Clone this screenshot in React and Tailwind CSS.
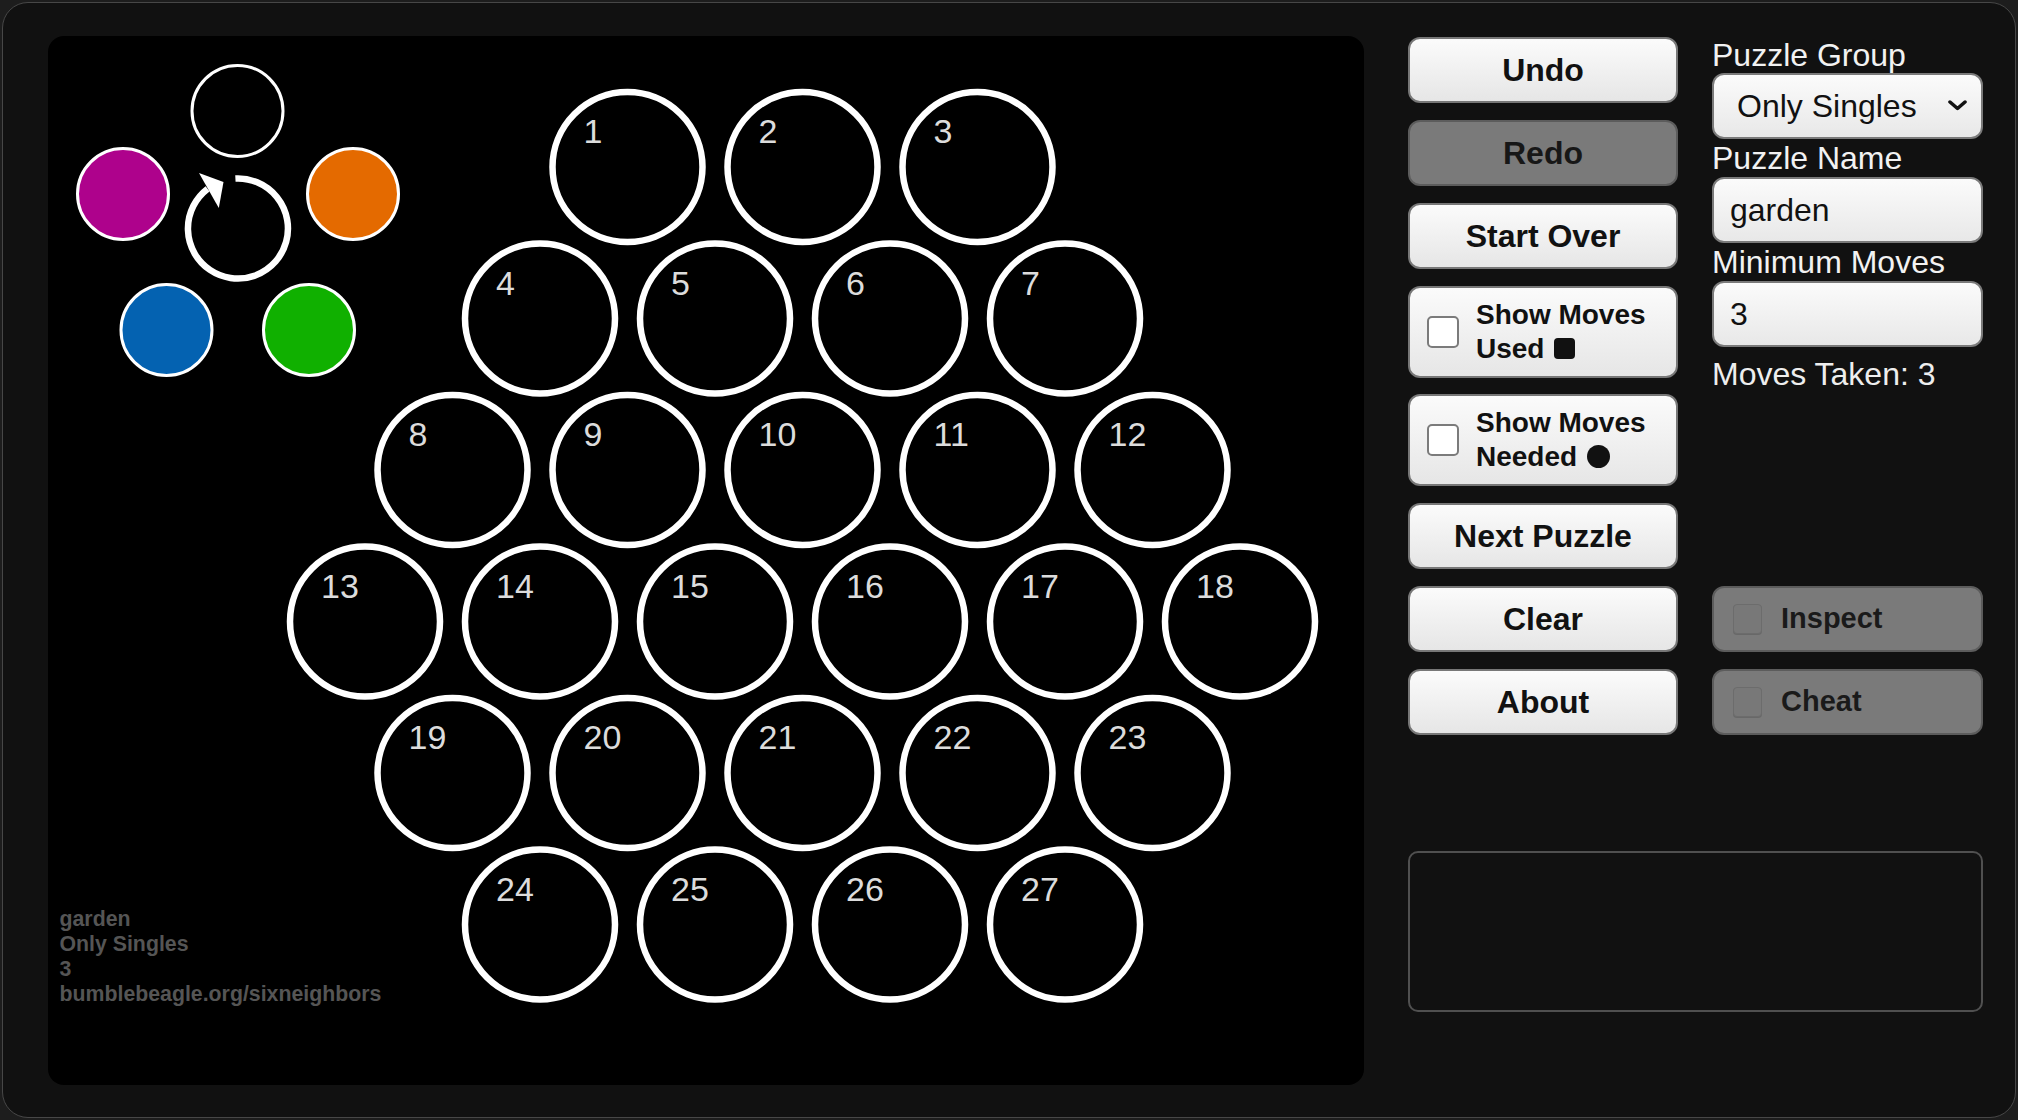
import clsx from 'clsx';

const ROWS = [3, 4, 5, 6, 5, 4];
const ROW_START = [579.5, 492, 404.5, 317, 404.5, 492];

const PALETTE = [
    { cx: 75, cy: 158, fill: '#ae028c' },
    { cx: 305, cy: 158, fill: '#e46a00' },
    { cx: 118.5, cy: 294, fill: '#0462b1' },
    { cx: 261, cy: 294, fill: '#10b000' },
];

function boardCells() {
    const cells = [];
    let n = 0;
    ROWS.forEach((count, row) => {
        for (let i = 0; i < count; i++) {
            n += 1;
            cells.push({ n, x: ROW_START[row] + i * 175, y: 131 + row * 151.5 });
        }
    });
    return cells;
}

function Board() {
    const cells = boardCells();

    return (
        <div className="relative h-[1049px] w-[1316px] shrink-0 rounded-[16px] bg-black">
            <svg className="absolute inset-0" width="1316" height="1049" viewBox="0 0 1316 1049">
                {/* colour picker */}
                <circle cx="189.5" cy="75" r="45.5" fill="black" stroke="white" strokeWidth="3" />
                {PALETTE.map((p) => (
                    <circle key={p.fill} cx={p.cx} cy={p.cy} r="45.5" fill={p.fill} stroke="white" strokeWidth="3" />
                ))}
                <path
                    d="M187.4 142.6 A50 50 0 1 1 159.6 152.8"
                    fill="none"
                    stroke="white"
                    strokeWidth="6.5"
                />
                <polygon points="151,137 175.5,146 170.8,172" fill="white" />

                {/* puzzle cells */}
                {cells.map((c) => (
                    <g key={c.n}>
                        <circle cx={c.x} cy={c.y} r="75" fill="black" stroke="white" strokeWidth="6.5" />
                        <text x={c.x - 44} y={c.y - 24} fill="#dcdcdc" fontSize="34">
                            {c.n}
                        </text>
                    </g>
                ))}
            </svg>

            <div className="absolute bottom-[78px] left-[12px] text-[21.3px] font-bold leading-[25px] text-[#555555]">
                <div>garden</div>
                <div>Only Singles</div>
                <div>3</div>
                <div>bumblebeagle.org/sixneighbors</div>
            </div>
        </div>
    );
}

function Button({ children, disabled }) {
    return (
        <button
            type="button"
            className={clsx(
                'flex h-[66.5px] w-full items-center justify-center rounded-[12px] border-2 text-[32px] font-bold leading-none',
                disabled
                    ? 'border-[#5c5c5c] bg-[#7a7a7a] text-[#171717]'
                    : 'border-[#777777] bg-linear-to-b from-[#fbfbfb] to-[#e6e6e6] text-[#111111]',
            )}
        >
            {children}
        </button>
    );
}

function ToggleButton({ line1, line2, marker }) {
    return (
        <button
            type="button"
            className="flex h-[92px] w-full items-center rounded-[12px] border-2 border-[#777777] bg-linear-to-b from-[#fbfbfb] to-[#e6e6e6] pl-[17px] text-left text-[#111111]"
        >
            <span className="h-[32px] w-[32px] shrink-0 rounded-[5px] border-2 border-[#7b7b7b] bg-white" />
            <span className="ml-[17px] text-[28px] font-bold leading-[34px]">
                {line1}
                <br />
                {line2}
                {marker === 'square' ? (
                    <span className="ml-[10px] inline-block h-[21px] w-[21px] rounded-[4px] bg-[#111111] align-[-1px]" />
                ) : (
                    <span className="ml-[10px] inline-block h-[23px] w-[23px] rounded-full bg-[#111111] align-[-2px]" />
                )}
            </span>
        </button>
    );
}

function DisabledCheck({ label }) {
    return (
        <button
            type="button"
            className="flex h-[66.5px] w-full items-center rounded-[12px] border-2 border-[#5c5c5c] bg-[#7a7a7a] pl-[19px] text-[29px] font-bold text-[#1a1a1a]"
        >
            <span className="h-[30px] w-[29px] shrink-0 rounded-[4px] border border-[#6c6c6c] bg-[#787878] shadow-[0_1px_0_#686868]" />
            <span className="ml-[19px]">{label}</span>
        </button>
    );
}

function Field({ children }) {
    return (
        <div className="flex h-[66px] items-center rounded-[12px] border-2 border-[#7a7a7a] bg-linear-to-b from-[#fbfbfb] to-[#e8e8e8] pl-[16px] pr-[14px] text-[32px] text-[#111111]">
            {children}
        </div>
    );
}

export default function App() {
    return (
        <div className="h-[1120px] w-[2018px] bg-[#1d1d1d] p-[2px] font-['Liberation_Sans',Arial,sans-serif]">
            <div className="flex h-full items-start rounded-[26px] border-[1.5px] border-[#474747] bg-[#111111] pl-[44.5px] pt-[32.5px]">
                <Board />

                <div className="ml-[44.5px] flex w-[575px] flex-col">
                    <div className="mt-[1px] grid grid-cols-[270px_271px] gap-x-[34px]">
                        <div className="flex flex-col gap-[16.5px]">
                            <Button>Undo</Button>
                            <Button disabled>Redo</Button>
                            <Button>Start Over</Button>
                            <ToggleButton line1="Show Moves" line2="Used" marker="square" />
                            <ToggleButton line1="Show Moves" line2="Needed" marker="dot" />
                            <Button>Next Puzzle</Button>
                            <Button>Clear</Button>
                            <Button>About</Button>
                        </div>

                        <div className="flex flex-col text-[#f2f2f2]">
                            <div className="h-[36px] text-[32px] leading-[36px]">Puzzle Group</div>
                            <Field>
                                <span className="ml-[7px] flex-1">Only Singles</span>
                                <svg width="19" height="11" viewBox="0 0 19 11">
                                    <path
                                        d="M2 2 L9.5 8.5 L17 2"
                                        fill="none"
                                        stroke="#111"
                                        strokeWidth="3.5"
                                        strokeLinecap="round"
                                        strokeLinejoin="round"
                                    />
                                </svg>
                            </Field>
                            <div className="h-[38px] text-[32px] leading-[38px]">Puzzle Name</div>
                            <Field>garden</Field>
                            <div className="h-[38px] text-[32px] leading-[38px]">Minimum Moves</div>
                            <Field>3</Field>
                            <div className="mt-[8px] text-[32px] leading-[38px] text-[#eeeeee]">Moves Taken: 3</div>

                            <div className="mt-auto flex flex-col gap-[16.5px]">
                                <DisabledCheck label="Inspect" />
                                <DisabledCheck label="Cheat" />
                            </div>
                        </div>
                    </div>

                    <div className="mt-[116px] h-[161px] rounded-[10px] border-2 border-[#505050]" />
                </div>
            </div>
        </div>
    );
}
